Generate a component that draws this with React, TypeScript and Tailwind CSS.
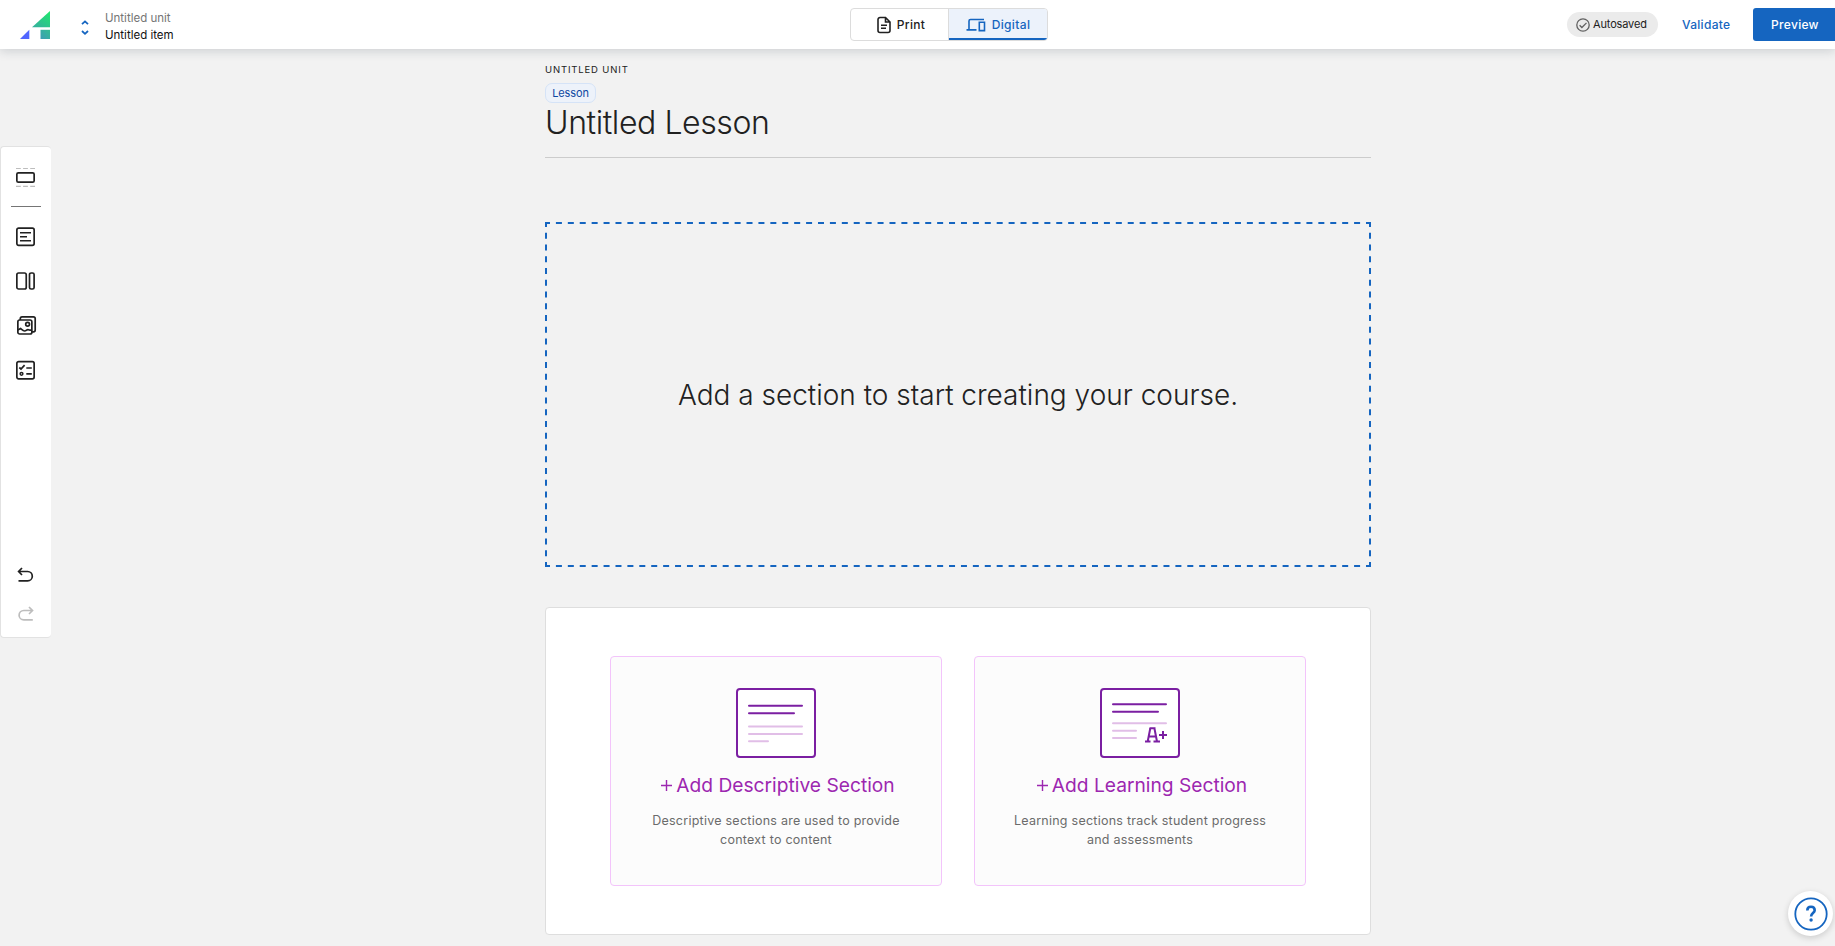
import type { ReactNode } from 'react';

function Logo() {
  return (
    <svg width="30" height="28" viewBox="0 0 30 28" className="block">
      <defs>
        <linearGradient id="g1" x1="1" y1="0" x2="0.3" y2="1">
          <stop offset="0" stopColor="#1fea6c" />
          <stop offset="1" stopColor="#34b49a" />
        </linearGradient>
        <linearGradient id="g2" x1="1" y1="0" x2="0" y2="1">
          <stop offset="0" stopColor="#33bd92" />
          <stop offset="1" stopColor="#3d9db5" />
        </linearGradient>
      </defs>
      <path d="M30 0v16.3H12z" fill="url(#g1)" />
      <path d="M9.3 18.8V28H0z" fill="#5166ff" />
      <path d="M20.5 18.8H30V28h-9.500z" fill="url(#g2)" />
    </svg>
  );
}

function Icon({ children, className = '' }: { children: ReactNode; className?: string }) {
  return (
    <svg
      width="24"
      height="24"
      viewBox="0 0 24 24"
      fill="none"
      stroke="currentColor"
      strokeWidth="1.7"
      className={`block shrink-0 ${className}`}
    >
      {children}
    </svg>
  );
}

function Header() {
  return (
    <header className="relative z-10 flex h-[49px] shrink-0 items-center justify-between bg-white shadow-[0_2px_10px_rgba(30,45,60,0.18)]">
      <div className="flex flex-1 items-center">
        <div className="ml-5 mt-px">
          <Logo />
        </div>
        <svg width="8" height="16" viewBox="0 0 8 16" fill="none" stroke="#1565c0" strokeWidth="1.8" className="ml-[31px] mt-[7px] block">
          <path d="M1 4.200L4 1.400l3 2.800M1 11l3 2.800L7 11" />
        </svg>
        <div className="ml-4 mt-[5px] text-[11.5px] leading-[17px]">
          <div className="text-[#757575]">Untitled unit</div>
          <div className="text-[#111111]">Untitled item</div>
        </div>
      </div>
      <div className="ml-[63px] flex h-[33px] w-[198px] overflow-hidden rounded-[4px] border border-[#dcdcdc] text-[12px] font-medium tracking-[0.35px]">
        <button className="flex w-[98px] items-center justify-center gap-[5px] border-r border-[#dcdcdc] pl-[2px] text-[#212121]">
          <svg width="16" height="18" viewBox="0 0 16 18" fill="none" stroke="currentColor" strokeWidth="1.6" className="block">
            <path d="M9.500 1.500H4A2 2 0 0 0 2 3.500v11a2 2 0 0 0 2 2h8a2 2 0 0 0 2-2V6zM9.500 1.500V6H14M5 9.300h6M5 12.300h5" />
          </svg>
          Print
        </button>
        <button className="flex w-[98px] items-center justify-center gap-[6px] bg-[#ecf2fb] text-[#1565c0] shadow-[inset_0_-2px_0_#1565c0]">
          <svg width="20" height="16" viewBox="0 0 20 16" fill="none" stroke="currentColor" strokeWidth="1.6" className="block">
            <path d="M18 2.500H4.500a1.500 1.500 0 0 0-1.500 1.500v9M0.500 12.900h10M13.300 5.300h5.200v8.300h-5.200z" />
          </svg>
          Digital
        </button>
      </div>
      <div className="flex flex-1 items-center justify-end text-[12px] font-medium tracking-[0.3px]">
        <div className="flex h-[25px] w-[91px] items-center gap-[3px] rounded-full bg-[#ebebeb] pl-[9px] text-[11px] font-normal tracking-[-0.15px] text-[#212121]">
          <svg width="14" height="14" viewBox="0 0 14 14" fill="none" stroke="#616161" strokeWidth="1.300" className="block">
            <circle cx="7" cy="7" r="6.200" />
            <path d="M3.600 7.200l2.300 2.300 4.600-4.600" />
          </svg>
          Autosaved
        </div>
        <button className="ml-6 w-[48px] whitespace-nowrap text-[#1565c0]">Validate</button>
        <button className="ml-[23px] h-[33px] w-[82px] rounded-l-[3px] bg-[#1565c0] pl-[2px] text-white">Preview</button>
      </div>
    </header>
  );
}

function Toolbar() {
  return (
    <aside className="flex h-[492px] w-[51px] flex-col items-center rounded-[4px] border-y border-l border-[#e2e2e2] bg-white pr-[2px] text-[#212121]">
      <Icon className="mt-[19px]">
        <rect x="3.850" y="6.850" width="17.3" height="9.300" rx="1.500" />
        <path d="M3 2.500h19M3 20.300h19" stroke="#bdbdbd" strokeWidth="1.200" strokeDasharray="4.800 2.300" />
      </Icon>
      <div className="ml-[2px] mt-[16px] h-px w-[30px] shrink-0 bg-[#757575]" />
      <Icon className="mt-[18px]">
        <rect x="3.850" y="3.100" width="17.3" height="17.3" rx="1.800" />
        <path d="M7 7.800h11M7 11.800h7M7 15.800h11" strokeWidth="1.400" />
      </Icon>
      <Icon className="mt-[20px]">
        <rect x="3.850" y="4" width="9.400" height="16" rx="1.800" />
        <rect x="16.500" y="4" width="4.600" height="16" rx="1.600" />
      </Icon>
      <Icon className="mt-[20px]">
        <rect x="4.850" y="7" width="14" height="14" rx="1.800" />
        <path d="M7.300 7V5.600a1.800 1.800 0 0 1 1.800-1.800H20.400A1.800 1.800 0 0 1 22.200 5.600V17a1.800 1.800 0 0 1-1.800 1.800H19M4.850 17l2.700-1.500c1.500 1.200 2.300 2.500 4 2.500s1.700-1.300 3.400-1.300 1.700 1 4 .3" />
        <circle cx="14.600" cy="11.300" r="1.900" />
      </Icon>
      <Icon className="mt-[21px]">
        <rect x="3.850" y="3.600" width="17.3" height="17.3" rx="1.800" />
        <path d="M6.300 9.500l1.700 1.500L11.600 7.100M13.300 10h5.500M13.300 15.800h5.500" />
        <circle cx="8.500" cy="15.800" r="1.400" strokeWidth="1.500" />
      </Icon>
      <Icon className="mt-auto">
        <path d="M9 4L5.600 7.500 9 11M5.800 7.500h8.800a4.700 4.700 0 0 1 0 9.400H5.500" />
      </Icon>
      <Icon className="mb-[10px] mt-[15px] text-[#bdbdbd]">
        <path d="M16 4L19.500 7.500 16 11M19.300 7.500h-8.500a4.700 4.700 0 0 0 0 9.400h9" />
      </Icon>
    </aside>
  );
}

function DescriptiveArt() {
  return (
    <svg width="80" height="70" viewBox="0 0 80 70" fill="none" strokeWidth="2" strokeLinecap="round" className="block">
      <rect x="1" y="1" width="78" height="68" rx="3" fill="#fff" stroke="#7b1fa2" />
      <path d="M13 17.800h53M13 25.300h45" stroke="#7b1fa2" />
      <path d="M13 38.500h53M13 46h53M13 53.300h19" stroke="#e1bee7" />
    </svg>
  );
}

function LearningArt() {
  return (
    <svg width="80" height="70" viewBox="0 0 80 70" fill="none" strokeWidth="2" strokeLinecap="round" className="block">
      <rect x="1" y="1" width="78" height="68" rx="3" fill="#fff" stroke="#7b1fa2" />
      <path d="M13 16.200h53M13 23.700h45" stroke="#7b1fa2" />
      <path d="M13 35.300h53M13 42.700h23M13 50h23" stroke="#e1bee7" />
      <g stroke="#7b1fa2" strokeLinecap="butt">
        <path d="M45 53.500h5.500M53.500 53.500H60M49.500 40.200h6M47.700 53.500l2.600-13.300M57 53.500l-2.600-13.300M49 48.500h7" />
        <path d="M59 47h8M63 43v8" />
      </g>
    </svg>
  );
}

function SectionCard({ art, title, lines }: { art: ReactNode; title: string; lines: [string, string] }) {
  return (
    <button className="flex h-[230px] flex-1 flex-col items-center rounded-[4px] border border-[#f3c4fb] bg-[#fcfcfc] pt-[31px]">
      {art}
      <span className="mt-[13px] flex items-center gap-[4px] pl-[4px] text-[19.200px] leading-[28px] text-[#9c27b0]">
        <svg width="11" height="11" viewBox="0 0 11 11" fill="none" stroke="currentColor" strokeWidth="1.400" className="mt-px block">
          <path d="M5.500 0v11M0 5.500h11" />
        </svg>
        {title}
      </span>
      <span className="mt-[12px] text-[12.500px] leading-[19px] tracking-[0.25px] text-[#6b6b6b]">
        {lines[0]}
        <br />
        {lines[1]}
      </span>
    </button>
  );
}

function DashedFrame() {
  return (
    <svg
      width="826"
      height="345"
      viewBox="0 0 826 345"
      fill="none"
      stroke="#1565c0"
      strokeWidth="2"
      className="pointer-events-none absolute inset-0"
    >
      <path d="M0 1h826M0 344h826" strokeDasharray="6 5.913" strokeDashoffset="1" />
      <path d="M1 0v345M825 0v345" strokeDasharray="6 5.759" strokeDashoffset="1" />
    </svg>
  );
}

export default function App() {
  return (
    <div className="relative flex h-[946px] w-[1835px] flex-col overflow-hidden bg-[#f2f2f2] font-['Inter',sans-serif]">
      <Header />
      <div className="flex flex-1">
        <div className="w-[545px] pt-[97px]">
          <Toolbar />
        </div>
        <main className="w-[826px]">
          <div className="mt-[13px] text-[9.500px] leading-[15px] tracking-[0.85px] text-[#212121]">UNTITLED UNIT</div>
          <div className="mt-[6px] flex h-[20px] w-[51px] items-center justify-center rounded-[7px] border border-[#d5e3f7] bg-[#edf2fa] text-[11px] tracking-[-0.1px] text-[#0d47a1]">
            Lesson
          </div>
          <h1 className="h-[55px] border-b border-[#cccccc] text-[32px] font-light leading-[40px] tracking-[-0.42px] text-[#212121]">
            Untitled Lesson
          </h1>
          <div className="relative mt-[64px] flex h-[345px] items-center justify-center text-[28px] font-light text-[#212121]">
            <DashedFrame />
            Add a section to start creating your course.
          </div>
          <section className="mt-[40px] flex gap-8 rounded-[4px] border border-[#dedede] bg-white px-16 py-12">
            <SectionCard
              art={<DescriptiveArt />}
              title="Add Descriptive Section"
              lines={['Descriptive sections are used to provide', 'context to content']}
            />
            <SectionCard
              art={<LearningArt />}
              title="Add Learning Section"
              lines={['Learning sections track student progress', 'and assessments']}
            />
          </section>
        </main>
      </div>
      <button className="absolute bottom-[10px] right-[2px] flex h-[45px] w-[45px] items-center justify-center rounded-full bg-white shadow-[0_2px_6px_rgba(0,0,0,0.16)]">
        <svg width="34" height="34" viewBox="0 0 34 34" fill="none" stroke="#1565c0" className="block">
          <circle cx="17" cy="17" r="15.700" strokeWidth="1.800" />
          <path d="M13.300 13.500c0-2.400 1.600-3.700 3.700-3.700s3.700 1.300 3.700 3.400c0 2.800-3.600 3-3.600 6.200" strokeWidth="2.600" />
          <circle cx="17.100" cy="23" r="1.700" fill="#1565c0" stroke="none" />
        </svg>
      </button>
    </div>
  );
}
